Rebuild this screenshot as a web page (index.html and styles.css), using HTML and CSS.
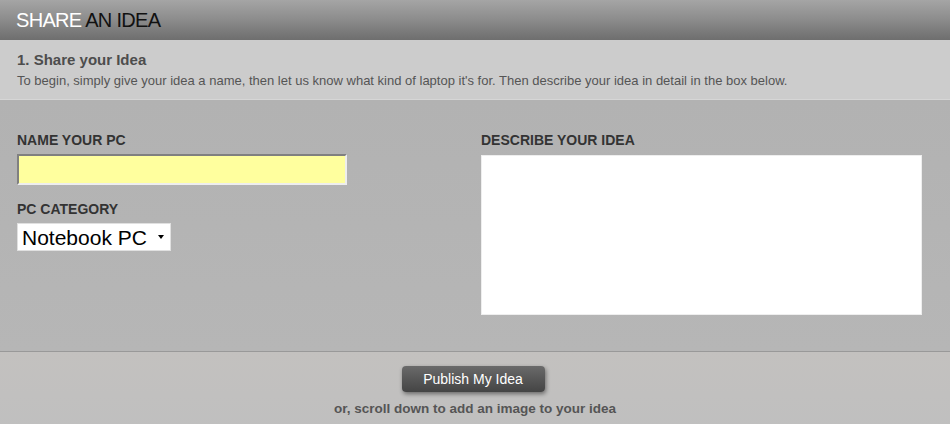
FILE: index.html
```html
<!DOCTYPE html>
<html lang="en">
<head>
    <meta charset="UTF-8">
    <title>Share an Idea</title>
    <link rel="stylesheet" href="styles.css">
</head>
<body>
    <div class="header">
        <h1><span class="light">SHARE</span> AN IDEA</h1>
    </div>
    <div class="intro">
        <h2>1. Share your Idea</h2>
        <p>To begin, simply give your idea a name, then let us know what kind of laptop it's for. Then describe your idea in detail in the box below.</p>
    </div>
    <form class="form">
        <div class="col-left">
            <label for="name">NAME YOUR PC</label>
            <input type="text" id="name" class="name-input">
            <label for="cat" class="second">PC CATEGORY</label>
            <div class="select-wrap">
                <select id="cat" class="category">
                    <option>Notebook PC</option>
                </select>
            </div>
        </div>
        <div class="col-right">
            <label for="idea">DESCRIBE YOUR IDEA</label>
            <textarea id="idea" class="idea"></textarea>
        </div>
    </form>
    <div class="footer">
        <button type="button" class="publish">Publish My Idea</button>
        <p>or, scroll down to add an image to your idea</p>
    </div>
</body>
</html>
```

FILE: styles.css
```css
body {
    margin: 0;
    font-family: 'Liberation Sans', Arial, sans-serif;
    background-color: #bfbfbf;
}
.header {
    height: 40px;
    background: linear-gradient(#a5a5a5 0%, #8e8e8e 45%, #6e6e6e 100%);
    padding-left: 16px;
}
.header h1 {
    margin: 0;
    font-weight: normal;
    font-size: 20px;
    line-height: 40px;
    letter-spacing: -0.7px;
    color: #111;
}
.header .light {
    color: #fff;
}
.intro {
    background-color: #cccccc;
    height: 60px;
    padding: 0 17px;
    box-sizing: border-box;
    border-bottom: 1px solid #d6d6d6;
}
.intro h2 {
    margin: 0;
    padding-top: 12px;
    font-size: 15px;
    color: #4d4d4d;
    line-height: 16px;
}
.intro p {
    margin: 5px 0 0;
    font-size: 13px;
    color: #555;
    line-height: 16px;
}
.form {
    display: flex;
    height: 252px;
    box-sizing: border-box;
    padding: 32px 17px 0;
    background: linear-gradient(#b2b2b2, #b6b6b6);
    border-bottom: 1px solid #999;
}
.col-left {
    width: 464px;
    display: flex;
    flex-direction: column;
    align-items: flex-start;
}
.col-right {
    display: flex;
    flex-direction: column;
}
label {
    font-size: 14px;
    font-weight: bold;
    color: #333;
    line-height: 16px;
    margin-bottom: 6px;
}
.col-right label {
    margin-bottom: 7px;
}
.second {
    margin-top: 16px;
}
.name-input {
    width: 330px;
    height: 31px;
    box-sizing: border-box;
    margin: 0;
    background-color: #ffff9e;
    border: 2px solid #eee;
    border-top-color: #808080;
    border-left-color: #808080;
}
.select-wrap {
    position: relative;
}
.select-wrap::after {
    content: "";
    position: absolute;
    right: 7px;
    top: 12px;
    border-left: 3px solid transparent;
    border-right: 3px solid transparent;
    border-top: 4px solid #000;
    pointer-events: none;
}
.category {
    -webkit-appearance: none;
    appearance: none;
    width: 154px;
    height: 28px;
    margin: 0;
    padding: 0 0 0 4px;
    font-family: 'Liberation Sans', Arial, sans-serif;
    font-size: 21px;
    color: #000;
    background-color: #fff;
    border: 1px solid #e0e0e0;
    border-radius: 0;
}
.idea {
    width: 441px;
    height: 160px;
    box-sizing: border-box;
    margin: 0;
    border: 1px solid #eee;
    background-color: #fff;
    resize: none;
}
.footer {
    text-align: center;
    padding-top: 14px;
    height: 72px;
    background: linear-gradient(#c3c1bf, #bfbfbf);
}
.publish {
    width: 143px;
    height: 26px;
    margin-left: -4px;
    font-family: 'Liberation Sans', Arial, sans-serif;
    font-size: 14px;
    color: #fff;
    border: none;
    border-radius: 4px;
    background: linear-gradient(#6a6a6a, #444);
    box-shadow: 1px 2px 4px rgba(0, 0, 0, 0.45);
    cursor: pointer;
}
.footer p {
    margin: 9px 0 0;
    font-size: 13.5px;
    font-weight: bold;
    color: #555;
}
```
